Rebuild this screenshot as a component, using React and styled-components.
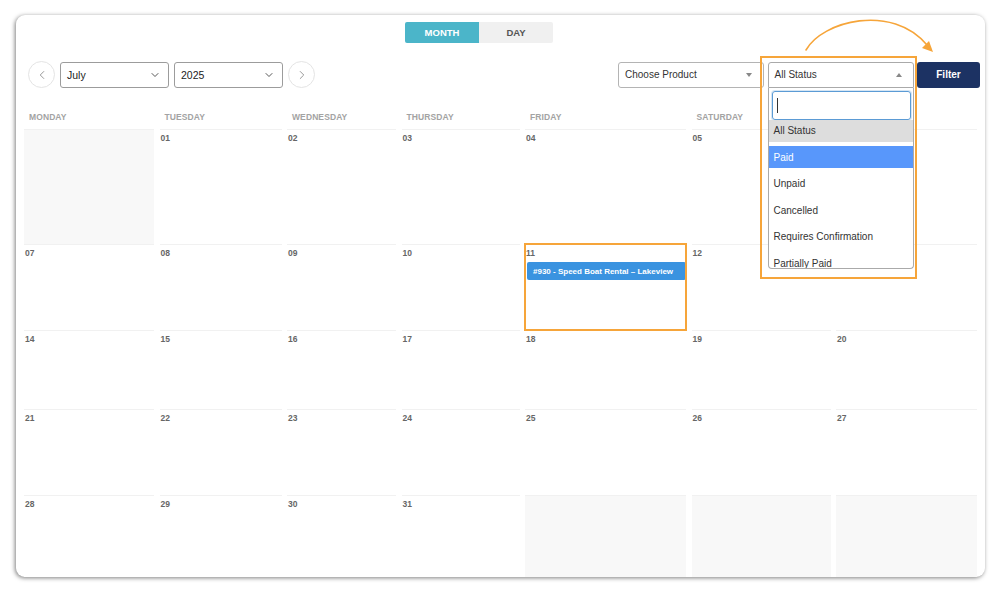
import React from 'react';
import styled, { createGlobalStyle, css } from 'styled-components';
import { ChevronLeft, ChevronRight, ChevronDown } from 'lucide-react';

const GlobalStyle = createGlobalStyle`
  html, body {
    margin: 0;
    background: #ffffff;
    font-family: "Liberation Sans", Arial, sans-serif;
  }
  * { box-sizing: border-box; }
`;

const Page = styled.div`
  width: 1000px;
  height: 591px;
  padding: 15px 0 0 16px;
`;

const Card = styled.div`
  width: 969px;
  height: 562px;
  background: #fff;
  border-radius: 9px;
  box-shadow: -1px 1px 4px rgba(0, 0, 0, 0.5);
  padding: 7px 5px 0 8px;
  display: flex;
  flex-direction: column;
  overflow: hidden;
`;

const ViewToggle = styled.div`
  display: flex;
  justify-content: center;
  padding-right: 46px;
`;

const ToggleButton = styled.div`
  width: 74px;
  height: 21px;
  display: flex;
  align-items: center;
  justify-content: center;
  font-size: 9.5px;
  font-weight: bold;
  color: ${p => (p.$active ? '#fff' : '#555')};
  background: ${p => (p.$active ? '#4bb5c9' : '#f0f0f0')};
  border-radius: ${p => (p.$active ? '2px 0 0 2px' : '0 2px 2px 0')};
`;

const Toolbar = styled.div`
  display: flex;
  justify-content: space-between;
  align-items: center;
  margin-top: 18px;
  padding-left: 4px;
  height: 27px;
`;

const Group = styled.div`
  display: flex;
  align-items: center;
  gap: ${p => p.$gap || 5}px;
`;

const NavCircle = styled.div`
  width: 27px;
  height: 27px;
  border-radius: 50%;
  border: 1px solid #e4e4e4;
  display: flex;
  align-items: center;
  justify-content: center;
  color: #8a8a8a;
`;

const NativeSelect = styled.div`
  width: ${p => p.$w}px;
  height: 26px;
  border: 1px solid #9c9c9c;
  border-radius: 3px;
  display: flex;
  align-items: center;
  justify-content: space-between;
  padding: 0 7px 0 6px;
  font-size: 10.5px;
  color: #222;
`;

const Select2 = styled.div`
  width: 146px;
  height: 26px;
  border: 1px solid ${p => (p.$open ? '#aaa' : '#b4b4b4')};
  border-radius: ${p => (p.$open ? '3px 3px 0 0' : '3px')};
  display: flex;
  align-items: center;
  justify-content: space-between;
  padding: 0 11px 0 6px;
  font-size: 10px;
  color: #333;
  background: #fff;
`;

const Caret = styled.span`
  width: 0;
  height: 0;
  border-left: 3px solid transparent;
  border-right: 3px solid transparent;
  ${p =>
    p.$up
      ? css`border-bottom: 4px solid #888;`
      : css`border-top: 4px solid #888;`}
`;

const StatusWrap = styled.div`
  position: relative;
`;

const Dropdown = styled.div`
  position: absolute;
  top: 100%;
  left: 0;
  width: 146px;
  height: 181px;
  background: #fff;
  border: 1px solid #aaa;
  border-top: none;
  border-radius: 0 0 4px 4px;
  overflow: hidden;
  z-index: 5;
`;

const Search = styled.div`
  margin: 3px 2px 0 3px;
  height: 29px;
  border: 1px solid #5b9bd5;
  border-radius: 3px;
  box-shadow: 0 0 0 1px rgba(91, 155, 213, 0.25);
  display: flex;
  align-items: center;
  padding-left: 4px;
`;

const TextCursor = styled.span`
  width: 1px;
  height: 15px;
  background: #333;
`;

const Option = styled.div`
  height: 22px;
  margin-bottom: 4.5px;
  display: flex;
  align-items: center;
  padding-left: 5px;
  font-size: 10px;
  color: ${p => (p.$hover ? '#fff' : '#333')};
  background: ${p => (p.$hover ? '#5897fb' : p.$selected ? '#dddddd' : 'transparent')};
`;

const Annotation = styled.div`
  position: absolute;
  left: -8px;
  top: -6px;
  width: 157px;
  height: 223px;
  border: 2px solid #f6a53a;
  pointer-events: none;
  z-index: 6;
`;

const CurvedArrow = styled.svg`
  position: absolute;
  left: 32px;
  top: -47px;
  overflow: visible;
  z-index: 6;
`;

const FilterButton = styled.button`
  width: 63px;
  height: 26px;
  border: none;
  border-radius: 3px;
  background: #1c3263;
  color: #fff;
  font-family: inherit;
  font-size: 10px;
  font-weight: bold;
`;

const Calendar = styled.div`
  flex: 1;
  margin-top: 20px;
  display: grid;
  grid-template-columns: 130px 122px 109px 118px 161px 139px 141px;
  grid-template-rows: 21px 115px 86px 79px 86px 1fr;
  column-gap: 5.5px;
`;

const DayHeader = styled.div`
  padding: 4px 0 0 5px;
  font-size: 8.5px;
  font-weight: 600;
  color: #a3a3a3;
  letter-spacing: 0.1px;
`;

const Cell = styled.div`
  border-top: 1.5px solid #f1f1f1;
  background: ${p => (p.$muted ? '#f8f8f8' : '#fff')};
  padding: 3px 0 0 1px;
  ${p =>
    p.$highlight &&
    css`
      outline: 2px solid #f6a53a;
      outline-offset: -1px;
      position: relative;
      z-index: 1;
    `}
`;

const DayNumber = styled.div`
  font-size: 8.5px;
  font-weight: bold;
  color: #666;
  line-height: 10px;
`;

const EventBar = styled.div`
  margin: 4px 0 0 1px;
  height: 18px;
  border-radius: 2px;
  background: #3a93e0;
  color: #fff;
  font-size: 8px;
  font-weight: bold;
  display: flex;
  align-items: center;
  padding-left: 6px;
  white-space: nowrap;
`;

const days = ['MONDAY', 'TUESDAY', 'WEDNESDAY', 'THURSDAY', 'FRIDAY', 'SATURDAY', 'SUNDAY'];

// null = day outside of July
const weeks = [
  [null, '01', '02', '03', '04', '05', '06'],
  ['07', '08', '09', '10', '11', '12', '13'],
  ['14', '15', '16', '17', '18', '19', '20'],
  ['21', '22', '23', '24', '25', '26', '27'],
  ['28', '29', '30', '31', null, null, null],
];

const statuses = ['All Status', 'Paid', 'Unpaid', 'Cancelled', 'Requires Confirmation', 'Partially Paid'];

export default function App() {
  return (
    <Page>
      <GlobalStyle />
      <Card>
        <ViewToggle>
          <ToggleButton $active>MONTH</ToggleButton>
          <ToggleButton>DAY</ToggleButton>
        </ViewToggle>

        <Toolbar>
          <Group>
            <NavCircle>
              <ChevronLeft size={14} strokeWidth={1.5} />
            </NavCircle>
            <NativeSelect $w={109}>
              July
              <ChevronDown size={12} strokeWidth={1.8} color="#444" />
            </NativeSelect>
            <NativeSelect $w={109}>
              2025
              <ChevronDown size={12} strokeWidth={1.8} color="#444" />
            </NativeSelect>
            <NavCircle>
              <ChevronRight size={14} strokeWidth={1.5} />
            </NavCircle>
          </Group>

          <Group $gap={3.5}>
            <Select2>
              Choose Product
              <Caret />
            </Select2>
            <StatusWrap>
              <Select2 $open>
                All Status
                <Caret $up />
              </Select2>
              <Dropdown>
                <Search>
                  <TextCursor />
                </Search>
                {statuses.map((s, i) => (
                  <Option key={s} $selected={i === 0} $hover={i === 1}>
                    {s}
                  </Option>
                ))}
              </Dropdown>
              <Annotation />
              <CurvedArrow width="140" height="45" viewBox="0 0 140 45">
                <path
                  d="M6 35 C 22 6, 92 -12, 127 30"
                  fill="none"
                  stroke="#f6a53a"
                  strokeWidth="1.6"
                  strokeLinecap="round"
                />
                <path d="M133 37 L122 33 L129 26 Z" fill="#f6a53a" />
              </CurvedArrow>
            </StatusWrap>
            <FilterButton>Filter</FilterButton>
          </Group>
        </Toolbar>

        <Calendar>
          {days.map(d => (
            <DayHeader key={d}>{d}</DayHeader>
          ))}
          {weeks.map((week, wi) =>
            week.map((n, di) => (
              <Cell key={`${wi}-${di}`} $muted={!n} $highlight={n === '11'}>
                {n && <DayNumber>{n}</DayNumber>}
                {n === '11' && <EventBar>#930 - Speed Boat Rental – Lakeview</EventBar>}
              </Cell>
            ))
          )}
        </Calendar>
      </Card>
    </Page>
  );
}
